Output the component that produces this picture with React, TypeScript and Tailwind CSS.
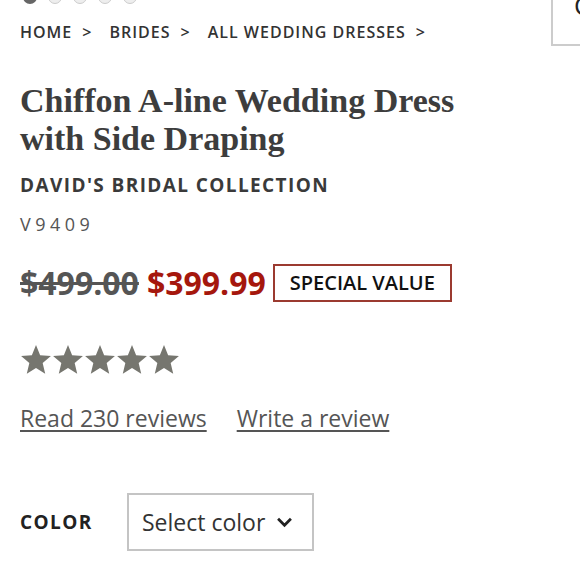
const crumbs = ['HOME', 'BRIDES', 'ALL WEDDING DRESSES'];

function Star() {
    return (
        <svg viewBox="0 0 24 24" className="w-[32px] h-[32px] fill-[#76766f]">
            <path d="M12 1.5l3.1 7.6 8.1.6-6.2 5.3 1.9 8-6.9-4.3-6.9 4.3 1.9-8L.8 9.7l8.1-.6z" />
        </svg>
    );
}

export default function App() {
    return (
        <div className="relative w-[580px] h-[579px] bg-white overflow-hidden font-['Open_Sans',sans-serif] text-[#333]">
            {/* carousel dots, mostly cut off at the top */}
            <div className="absolute -top-[10px] left-[23px] flex gap-[11px]">
                <span className="w-[14px] h-[14px] rounded-full bg-[#666]" />
                <span className="w-[14px] h-[14px] rounded-full bg-[#eee] border border-[#ccc]" />
                <span className="w-[14px] h-[14px] rounded-full bg-[#eee] border border-[#ccc]" />
                <span className="w-[14px] h-[14px] rounded-full bg-[#eee] border border-[#ccc]" />
                <span className="w-[14px] h-[14px] rounded-full bg-[#eee] border border-[#ccc]" />
            </div>

            {/* partially visible box at the right edge */}
            <div className="absolute -top-[20px] left-[551px] w-[60px] h-[66px] border-2 border-[#ccc] bg-white flex items-center">
                <span className="ml-[21px] mt-[-16px] text-[26px] text-[#222]">C</span>
            </div>

            <div className="px-[20px] pt-[20px]">
                <nav className="flex items-center text-[16px] font-semibold tracking-[1px] text-[#333] h-[24px]">
                    {crumbs.map((c) => (
                        <span key={c} className="flex items-center">
                            <span>{c}</span>
                            <span className="ml-[10px] mr-[17px]">&gt;</span>
                        </span>
                    ))}
                </nav>

                <h1 className="mt-[38px] font-['Liberation_Serif',serif] font-bold text-[34px] leading-[38px] text-[#3d3d3d]">
                    Chiffon A-line Wedding Dress
                    <br />
                    with Side Draping
                </h1>

                <div className="mt-[14px] text-[19px] font-bold tracking-[1.4px] text-[#3a3a3a] leading-[26px]">
                    DAVID'S BRIDAL COLLECTION
                </div>

                <div className="mt-[14px] text-[18px] tracking-[4.5px] text-[#555] leading-[24px]">V9409</div>

                <div className="mt-[25px] flex items-center">
                    <span className="text-[32px] font-bold text-[#555] line-through leading-[44px]">$499.00</span>
                    <span className="ml-[8px] text-[32px] font-bold text-[#a5170d] leading-[44px]">$399.99</span>
                    <span className="ml-[7px] w-[179px] h-[38px] border-2 border-[#9b3a30] flex items-center justify-center text-[20px] font-semibold text-[#111]">
                        SPECIAL VALUE
                    </span>
                </div>

                <div className="mt-[38px] flex">
                    <Star />
                    <Star />
                    <Star />
                    <Star />
                    <Star />
                </div>

                <div className="mt-[28px] flex gap-[30px] text-[23px] text-[#555] leading-[30px]">
                    <a className="underline underline-offset-[3px] decoration-[1.5px]">Read 230 reviews</a>
                    <a className="underline underline-offset-[3px] decoration-[1.5px]">Write a review</a>
                </div>

                <div className="mt-[60px] flex items-center">
                    <span className="w-[107px] text-[19px] font-bold tracking-[1.4px] text-[#222]">COLOR</span>
                    <button className="w-[187px] h-[58px] border-2 border-[#c4c4c4] flex items-center pl-[13px] text-[23px] text-[#333]">
                        Select color
                        <svg viewBox="0 0 18 12" className="ml-[11px] w-[17px] h-[11px]">
                            <polyline points="2,2 9,9 16,2" fill="none" stroke="#222" strokeWidth="3" />
                        </svg>
                    </button>
                </div>
            </div>
        </div>
    );
}
